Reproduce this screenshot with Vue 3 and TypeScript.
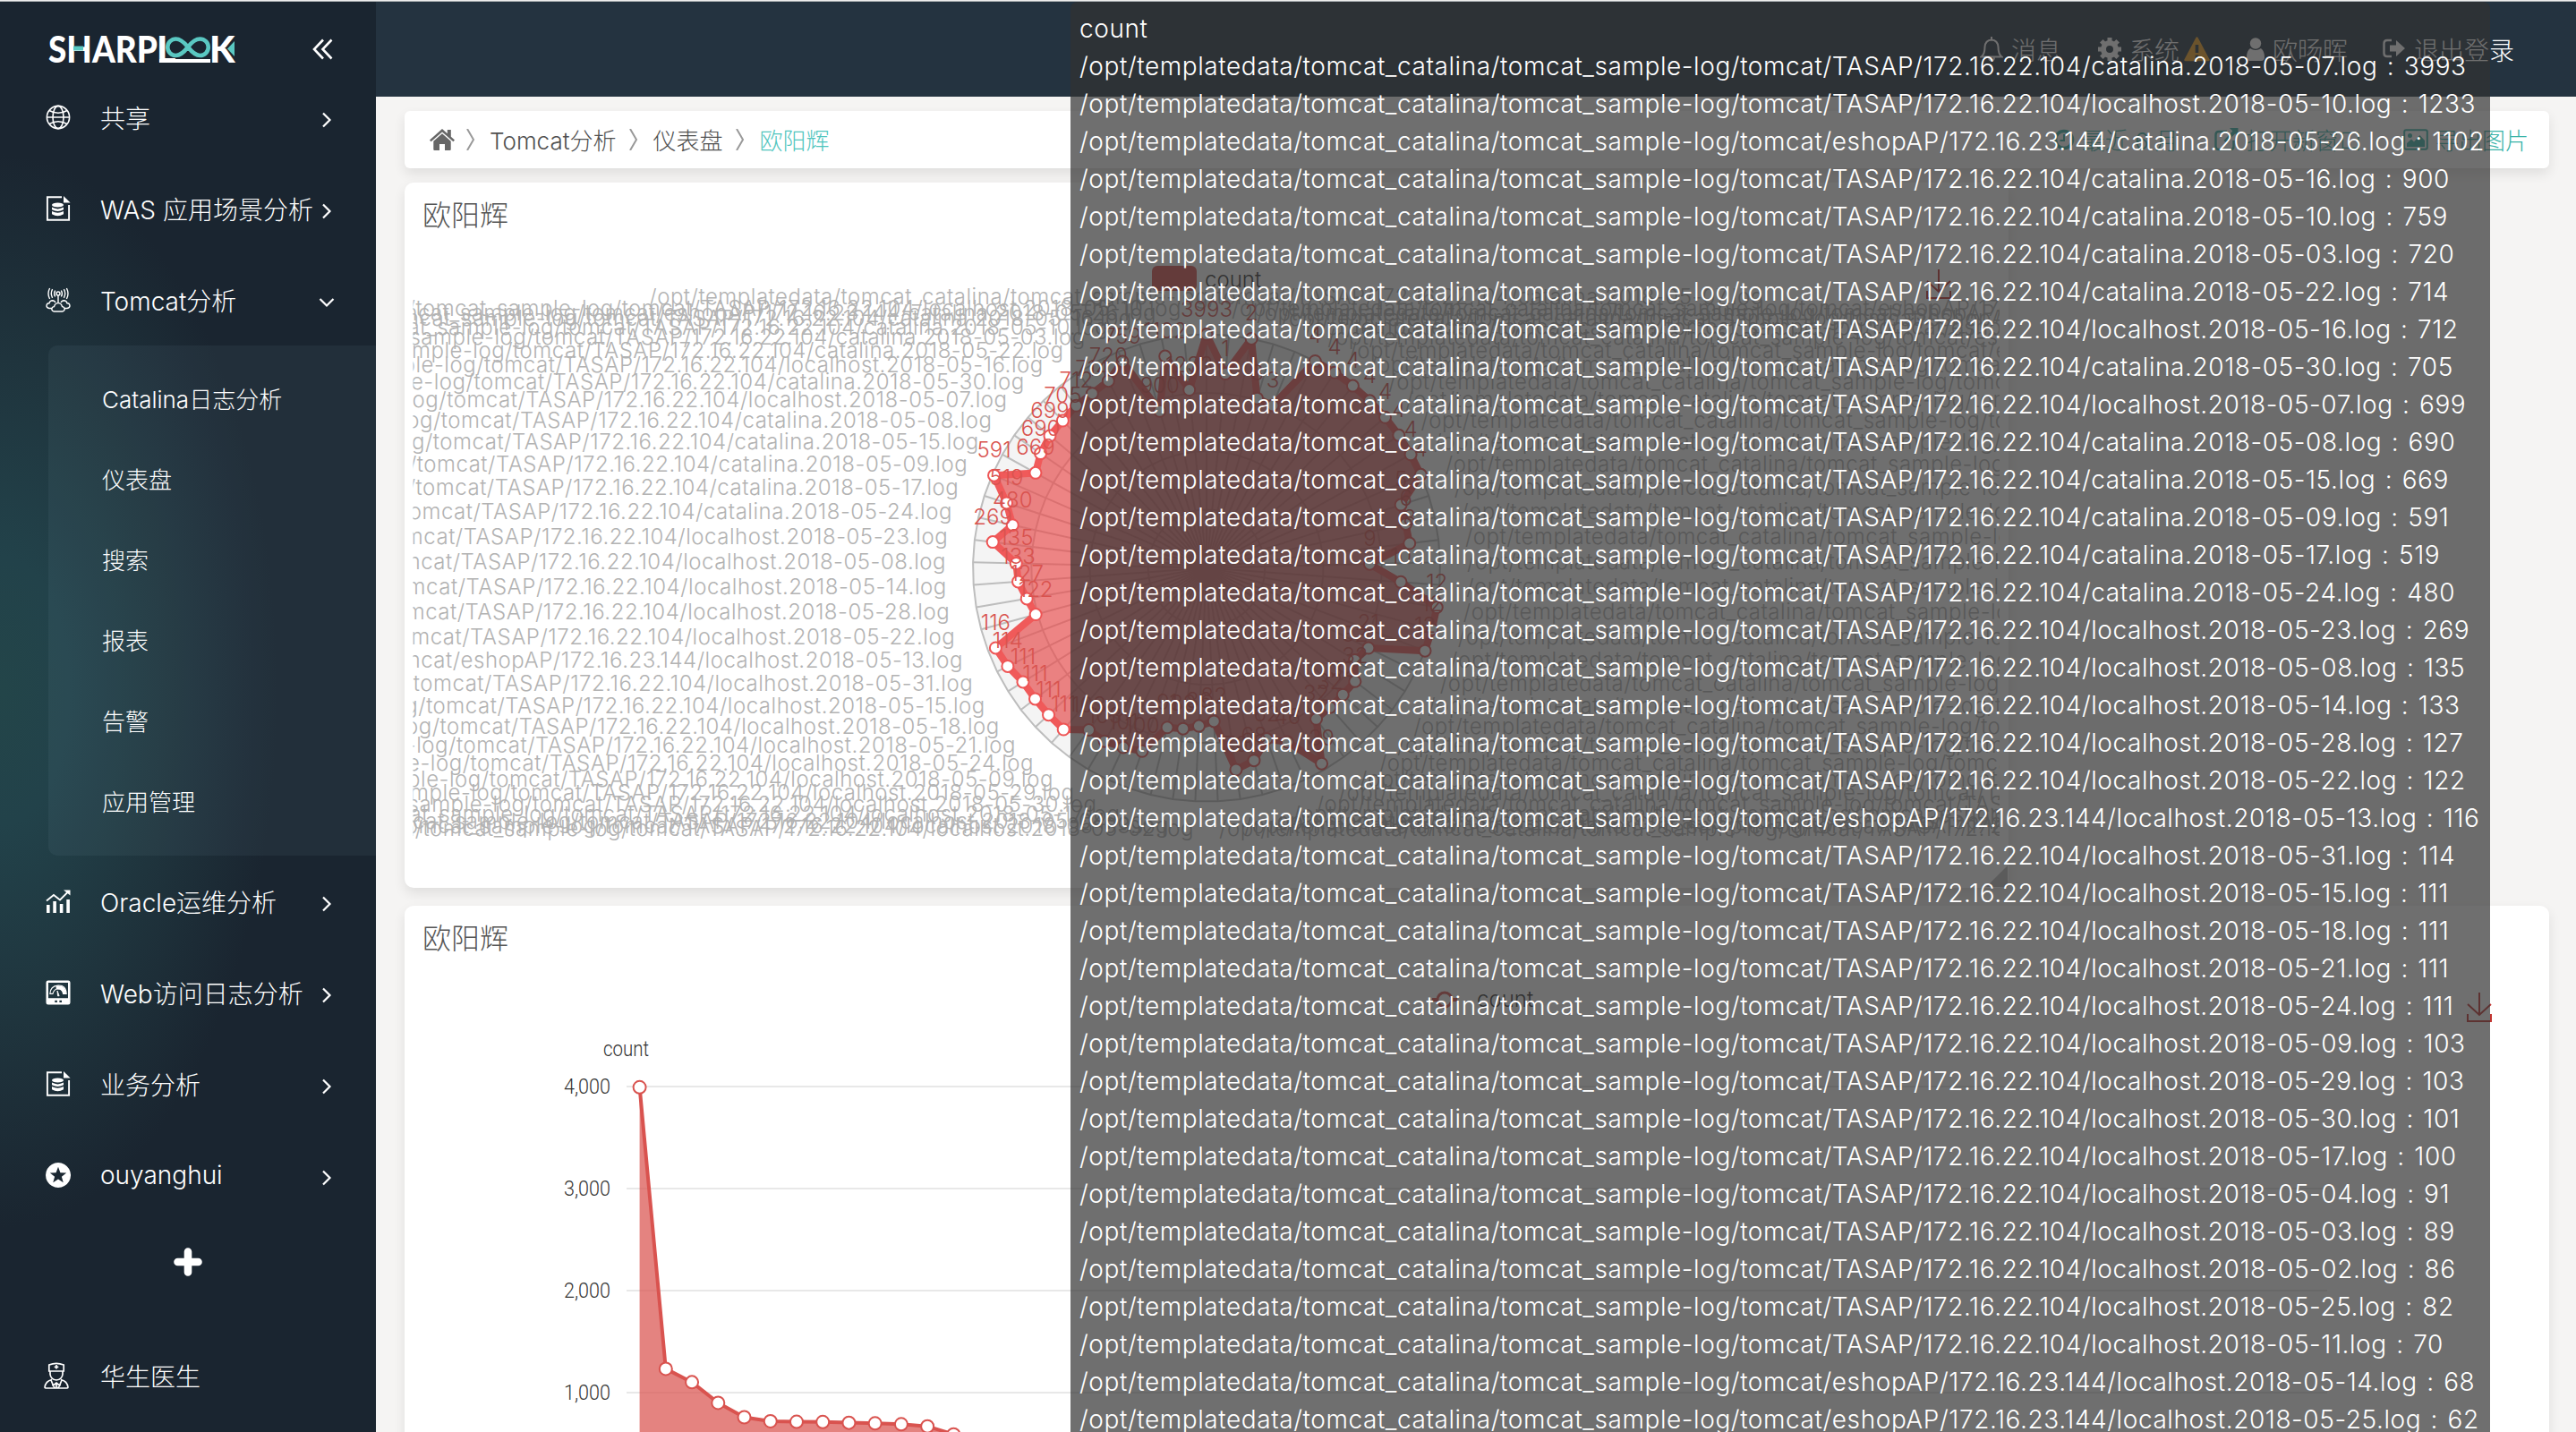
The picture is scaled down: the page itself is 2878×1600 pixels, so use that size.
<script setup lang="ts">
interface Row { app: string; file: string; date: string; value: number }

const parse = (s: string): Row => {
  const [kind, day, value] = s.split(' ')
  const shop = kind.startsWith('e')
  return {
    app: shop ? 'eshopAP/172.16.23.144' : 'TASAP/172.16.22.104',
    file: kind.endsWith('c') ? 'catalina' : 'localhost',
    date: `2018-05-${day}`,
    value: Number(value),
  }
}

const rows: Row[] = [
  'tc 07 3993', 'tl 10 1233', 'ec 26 1102', 'tc 16 900', 'tc 10 759', 'tc 03 720', 'tc 22 714', 'tl 16 712',
  'tc 30 705', 'tl 07 699', 'tc 08 690', 'tc 15 669', 'tc 09 591', 'tc 17 519', 'tc 24 480', 'tl 23 269',
  'tl 08 135', 'tl 14 133', 'tl 28 127', 'tl 22 122', 'el 13 116', 'tl 31 114', 'tl 15 111', 'tl 18 111',
  'tl 21 111', 'tl 24 111', 'tl 09 103', 'tl 29 103', 'tl 30 101', 'tl 17 100', 'tl 04 91', 'tl 03 89',
  'tl 02 86', 'tl 25 82', 'tl 11 70', 'el 14 68', 'el 25 62', 'tl 12 46', 'tl 27 39', 'tl 01 32',
  'tl 26 32', 'tl 20 32', 'tl 19 32', 'tc 31 32', 'tc 14 21', 'ec 13 12', 'ec 14 12', 'tc 28 12',
  'tc 11 10', 'tc 04 9', 'tc 29 8', 'tc 25 6', 'tc 12 5', 'ec 25 4', 'ec 27 4', 'ec 24 4',
  'ec 22 4', 'ec 21 4', 'ec 20 4', 'ec 18 4', 'ec 17 4', 'ec 16 3', 'ec 15 3', 'el 26 2', 'el 27 1',
].map(parse)

const path = (r: Row) => `/opt/templatedata/tomcat_catalina/tomcat_sample-log/tomcat/${r.app}/${r.file}.${r.date}.log`
const tipRows = rows.slice(0, 37)

/* radar geometry, in card coordinates */
const cx = 896
const cy = 430.6
const R = 261
const n = rows.length
const radii = [
  261, 200, 241, 183, 249, 236, 233, 232.6, 230, 229, 225.3, 218.6, 259, 235, 222, 240.6, 212.8, 211, 203.7, 197.8,
  252, 247.8, 241.4, 241, 241, 241, 223.7, 224.6, 221, 217, 183.5, 181.5, 176.7, 171.5, 227.8, 221.5, 202.4, 214.4,
  253.6, 208.5, 208, 208, 208.7, 195, 201.8, 261, 261, 261, 217.6, 182.4, 228.4, 228, 228.3, 261, 261, 261, 261, 261,
  261, 261, 261, 196, 197.7, 261, 218,
]
const at = (i: number, r: number) => {
  const a = (Math.PI * 2 * i) / n
  return { x: cx - Math.sin(a) * r, y: cy - Math.cos(a) * r }
}
const poly = (r: (i: number) => number) =>
  rows.map((_, i) => at(i, r(i))).map(p => `${p.x.toFixed(1)},${p.y.toFixed(1)}`).join(' ')
const rings = [1, 0.75, 0.5, 0.25].map(k => poly(() => R * k))
const spokes = rows.map((_, i) => at(i, R))
const nodes = rows.map((r, i) => ({ ...at(i, radii[i]), v: r.value }))
const shape = poly(i => radii[i])
const names = rows.map((r, i) => {
  const p = at(i, R + 30)
  return {
    x: p.x,
    y: i === 0 ? p.y - 4 : p.y + 8.5,
    anchor: i === 0 ? 'middle' : i <= n / 2 ? 'end' : 'start',
    text: path(r),
  }
})

/* area chart, in card coordinates */
const linePts = rows.map((r, i) => ({ x: 262.6 + i * 29.23, y: 658 - r.value * 0.114 }))
const lineStr = linePts.map(p => `${p.x.toFixed(1)},${p.y.toFixed(1)}`).join(' ')
const areaStr = `262.6,658 ${lineStr} ${linePts[n - 1].x.toFixed(1)},658`
const ticks = [
  { t: '4,000', y: 202 }, { t: '3,000', y: 316 }, { t: '2,000', y: 430 }, { t: '1,000', y: 544 },
]

const top = [
  { icon: 'globe', label: '共享', open: false },
  { icon: 'doc', label: 'WAS 应用场景分析', open: false },
  { icon: 'cloud', label: 'Tomcat分析', open: true },
]
const sub = ['Catalina日志分析', '仪表盘', '搜索', '报表', '告警', '应用管理']
const bottom = [
  { icon: 'trend', label: 'Oracle运维分析' },
  { icon: 'gauge', label: 'Web访问日志分析' },
  { icon: 'doc', label: '业务分析' },
  { icon: 'star', label: 'ouyanghui' },
]
</script>

<template>
  <div class="page">
    <svg width="0" height="0" class="defs">
      <symbol id="globe" viewBox="0 0 28 28"><g fill="none" stroke="#fff" stroke-width="1.6"><circle cx="14" cy="14" r="12.6" /><ellipse cx="14" cy="14" rx="6" ry="12.6" /><path d="M4 6.500q10 5.500 20 0M4 21.500q10-5.500 20 0M1.400 14h25.200" /></g></symbol>
      <symbol id="doc" viewBox="0 0 28 28"><path d="M18 1.200H1.900v25.600h24.200V10" fill="none" stroke="#fff" stroke-width="1.900" /><path d="M20 0v7.600h7.600z" fill="#fff" /><ellipse cx="13.500" cy="10" rx="6.500" ry="2.600" fill="#fff" /><path d="M7 12.600q6.500 3.600 13 0v2.600q-6.500 3.600-13 0zM7 17q6.500 3.600 13 0v3.200q-6.500 4-13 0z" fill="#fff" /></symbol>
      <symbol id="cloud" viewBox="0 0 28 28"><g fill="none" stroke="#fff" stroke-width="1.400"><circle cx="14" cy="7" r="2" /><path d="M14 9v8M10.600 3.500q-2 3.500 0 7M17.400 3.500q2 3.500 0 7M7.600 2.200q-2.600 4.800 0 9.600M20.400 2.200q2.600 4.800 0 9.600M4.600 1q-3.200 6 0 12M23.400 1q3.200 6 0 12" /><path d="M7.500 23.500H4q-3-.4-3-3 .3-2.800 3-2.800.8-3 3.600-3 2.700.2 3.200 2.500M20.500 23.500H24q3-.4 3-3-.3-2.800-3-2.800-.8-3-3.600-3-2.700.2-3.200 2.500M9.500 27q-2.600-.3-2.700-2.700.2-2.500 2.700-2.700 1-4 4.500-4t4.500 4q2.500.2 2.700 2.700-.1 2.400-2.700 2.700z" /></g></symbol>
      <symbol id="trend" viewBox="0 0 28 28"><path d="M1 18h3.600v9H1zM8.300 14h3.600v13H8.300zM15.800 17h3.600v10h-3.600zM23.300 12h3.600v15h-3.600z" fill="#fff" /><path d="M1 13.500 9 7l7 5.500L25 3.500" fill="none" stroke="#fff" stroke-width="1.800" /><path d="M20 1.500h7.500v6z" fill="#fff" /></symbol>
      <symbol id="gauge" viewBox="0 0 30 30"><path fill-rule="evenodd" fill="#fff" d="M3 .5h24q2.500 0 2.500 2.500v24q0 2.500-2.500 2.500H3Q.5 29.500.5 27V3Q.5.5 3 .5zM3.200 3.200v18.600h23.600V3.200zM11 24.500v2.400h2.800v-2.400zm5.500 0v2.400h2.800v-2.400z" /><path d="M5.200 16.500Q5.500 7 15 6.500T24.800 16.500H21Q20 11 15.500 10.500 10 10.500 8.500 16.500z" fill="none" stroke="#fff" stroke-width="1.200" /><path d="M12.500 7q11-1.800 12.300 9.500H21Q20 10.500 12.500 11z" fill="#fff" /><path d="M14 13l2.200 6h-1.700z" fill="#fff" stroke="#fff" /></symbol>
      <symbol id="star" viewBox="0 0 28 28"><path fill-rule="evenodd" fill="#fff" d="M14 0a14 14 0 1 0 .01 0zM14 4.800l2.400 6.400 6.800.3-5.300 4.200 1.800 6.600-5.700-3.700-5.700 3.700 1.800-6.600-5.300-4.200 6.800-.3z" /></symbol>
      <symbol id="doctor" viewBox="0 0 28 30"><g fill="none" stroke="#fff" stroke-width="1.700"><path d="M5.800 3q8-3.400 16.400 0v7H5.800zM7 10v3.500q.8 6 7 6.500 6.200-.5 7-6.500V10" /><path d="M9 19.500q-7 1.500-8 8.500.2 1 1.500 1h23q1.300 0 1.500-1-1-7-8-8.500M8 20l2.500 6 3.500-3 3.500 3L20 20M14 23v6M9.500 25l3 4M18.500 25l-3 4M14 3v4.600M11.700 5.300h4.600" /></g></symbol>
      <symbol id="right" viewBox="0 0 12 18"><path d="M2 1.500 9.500 9 2 16.500" fill="none" stroke="#fff" stroke-width="2.200" /></symbol>
      <symbol id="dl" viewBox="0 0 28 34"><path d="M14 0v25M1 13l13 12 13-12M1 24v8h26v-8" fill="none" stroke="#c23531" stroke-width="2" /></symbol>
    </svg>

    <div class="strip"></div>
    <div class="shell">
      <aside class="side">
        <div class="brand">
          <svg class="mark" width="210" height="36" viewBox="0 0 210 36">
            <g class="logo">
              <text x="0" y="32" textLength="122" lengthAdjust="spacingAndGlyphs">SHARP</text>
              <text x="121" y="32">L</text>
              <text x="180" y="32">K</text>
            </g>
            <rect x="28" y="13.500" width="11" height="5" fill="#5ac8c2" />
            <rect x="124" y="28" width="57" height="4" fill="#fff" />
            <path d="M156 14.500c-5-6-9-9-13.500-9a9 9 0 0 0 0 18.500c4.500 0 8.500-3 13.500-9.500s9-9 13.500-9a9 9 0 0 1 0 18.500c-4.500 0-8.500-3-13.500-9.500z" fill="none" stroke="#5ac8c2" stroke-width="4.600" />
            <path d="M208 8v17l-8-8.500z" fill="#5ac8c2" />
          </svg>
          <svg class="collapse" width="24" height="24" viewBox="0 0 24 24"><path d="M12 1.500 2 12l10 10.500M21.500 1.500 11.500 12l10 10.500" fill="none" stroke="#fff" stroke-width="2.600" /></svg>
        </div>
        <div v-for="m in top" :key="m.label" class="item">
          <svg class="ico"><use :href="'#' + m.icon" /></svg>
          <span>{{ m.label }}</span>
          <svg class="arrow" :class="{ open: m.open }"><use href="#right" /></svg>
        </div>
        <div class="sub">
          <div v-for="s in sub" :key="s" class="subitem">{{ s }}</div>
        </div>
        <div v-for="m in bottom" :key="m.label" class="item">
          <svg class="ico"><use :href="'#' + m.icon" /></svg>
          <span>{{ m.label }}</span>
          <svg class="arrow"><use href="#right" /></svg>
        </div>
        <div class="plus"><svg width="32" height="32" viewBox="0 0 32 32"><path d="M16 4.500v23M4.500 16h23" stroke="#fff" stroke-width="8.600" stroke-linecap="round" /></svg></div>
        <div class="item doctor">
          <svg class="ico"><use href="#doctor" /></svg>
          <span>华生医生</span>
        </div>
      </aside>

      <main class="main">
        <header class="header">
          <div class="hlink l1">
            <svg width="26" height="28" viewBox="0 0 26 28"><path d="M1.500 22.500q4-3 4-11Q6 4 13 3.500q7 .5 7.500 8 0 8 4 11zM10 23.500q.5 3 3 3t3-3M13 3.500V0" fill="none" stroke="#fff" stroke-width="2" /></svg>消息
          </div>
          <div class="hlink l2">
            <svg width="26" height="26" viewBox="0 0 26 26"><circle cx="13" cy="13" r="7" fill="none" stroke="#fff" stroke-width="6" /><path d="M13 0v5M13 21v5M0 13h5M21 13h5M3.800 3.800l3.500 3.500M18.700 18.700l3.500 3.500M22.200 3.800l-3.500 3.500M7.300 18.700l-3.500 3.500" stroke="#fff" stroke-width="5" /></svg>系统
            <svg class="warn" width="29" height="28" viewBox="0 0 29 28"><path d="M14.500 1.500 27.500 26h-26z" fill="#f0a020" stroke="#f0a020" stroke-width="2.500" stroke-linejoin="round" /><path d="M14.500 9v9M14.500 20.500v3.500" stroke="#24333f" stroke-width="3.600" /></svg>
          </div>
          <div class="hlink l3">
            <svg width="20" height="26" viewBox="0 0 20 26"><circle cx="10" cy="6.500" r="6.200" fill="#fff" /><path d="M4 12q6 4 12 0 4 3 4 10 0 4-4 4H4q-4 0-4-4 0-7 4-10z" fill="#fff" /></svg>欧旸晖
          </div>
          <div class="hlink l4">
            <svg width="26" height="24" viewBox="0 0 26 24"><path d="M10 2H5Q1.500 2 1.500 5.500v11Q1.500 20 5 20h5" fill="none" stroke="#fff" stroke-width="2.400" /><path d="M8 7.500h7V2l10 9-10 9v-5.500H8z" fill="#fff" /></svg>退出登录
          </div>
        </header>

        <div class="content">
          <nav class="card crumbs">
            <svg width="28" height="24" viewBox="0 0 28 24"><path d="M14 0 0 12.500l1.600 1.800L14 3.400l12.400 10.900 1.600-1.800-4.200-3.800V1h-4v4.200z" fill="#666" /><path d="M14 5.200 4.300 13.800V23q0 1 1 1H11v-7h6v7h5.700q1 0 1-1v-9.200z" fill="#666" /></svg>
            <svg class="sep s1"><path d="M1 0 8 12 1 24" /></svg>
            <span>Tomcat分析</span>
            <svg class="sep"><path d="M1 0 8 12 1 24" /></svg>
            <span>仪表盘</span>
            <svg class="sep"><path d="M1 0 8 12 1 24" /></svg>
            <span class="teal">欧阳辉</span>
            <div class="actions">
              <span class="act a1"><svg width="24" height="26" viewBox="0 0 24 26"><circle cx="12" cy="13" r="9.500" fill="none" stroke="#38b3a8" stroke-width="3.600" /><path d="M12 7v7H7.500" fill="none" stroke="#38b3a8" stroke-width="2" /></svg>最近 6 月</span>
              <span class="act a2"><svg width="27" height="26" viewBox="0 0 27 26"><path d="M14 4H5Q1.500 4 1.500 7.500v13Q1.500 24 5 24h13q3.500 0 3.500-3.500V14" fill="none" stroke="#38b3a8" stroke-width="2.400" /><path d="M17 0h9.500v9.500l-3.300-3.300L13 16.500 10.500 14 20.300 3.500z" fill="#38b3a8" /></svg>打开新窗口</span>
              <span class="act a3"><svg width="28" height="24" viewBox="0 0 28 24"><rect x="1.200" y="1.200" width="25.600" height="21.600" rx="2" fill="none" stroke="#38b3a8" stroke-width="2" /><circle cx="7.500" cy="7.500" r="2.500" fill="#38b3a8" /><path d="M4 20v-4l5-4.500 3 3L18.500 7l5.500 6v7z" fill="#38b3a8" /></svg>导出图片</span>
            </div>
          </nav>

          <section class="card radar">
            <h3>欧阳辉</h3>
            <svg class="chart" width="1792" height="788" viewBox="0 0 1792 788">
              <clipPath id="canvas"><rect x="9.500" y="60" width="1772.500" height="700" /></clipPath>
              <rect x="835" y="93" width="50" height="28" rx="6" fill="#d9534f" />
              <text x="894" y="116.500" class="legend">count</text>
              <polygon :points="rings[0]" fill="#f4f4f4" />
              <polygon :points="rings[1]" fill="#fff" />
              <polygon v-for="(r, i) in rings" :key="'r' + i" :points="r" fill="none" stroke="#bdbdbd" stroke-width="2" />
              <line v-for="(p, i) in spokes" :key="'s' + i" :x1="cx" :y1="cy" :x2="p.x" :y2="p.y" stroke="#bdbdbd" stroke-width="2" />
              <g clip-path="url(#canvas)">
                <text v-for="(t, i) in names" :key="'n' + i" :x="t.x" :y="t.y" :text-anchor="t.anchor" class="name">{{ t.text }}</text>
              </g>
              <polygon :points="shape" fill="#e65050" fill-opacity=".7" stroke="#f05a5a" stroke-width="8" stroke-linejoin="bevel" />
              <circle v-for="(p, i) in nodes" :key="'c' + i" :cx="p.x" :cy="p.y" r="6.500" fill="#fff" stroke="#ee5555" stroke-width="2" />
              <text v-for="(p, i) in nodes" :key="'v' + i" :x="p.x" :y="p.y - 20" class="val">{{ p.v }}</text>
              <path d="M1791 763v24h-24z" fill="#bbb" />
              <svg x="1700" y="97" width="28" height="34"><use href="#dl" /></svg>
            </svg>
          </section>

          <section class="card area">
            <h3>欧阳辉</h3>
            <svg class="chart" width="2396" height="588" viewBox="0 0 2396 588">
              <line v-for="k in ticks" :key="k.t" x1="248" x2="2148" :y1="k.y" :y2="k.y" stroke="#e8e8e8" stroke-width="2" />
              <text v-for="k in ticks" :key="'t' + k.t" x="178" :y="k.y + 8" textLength="52" lengthAdjust="spacingAndGlyphs" class="tick">{{ k.t }}</text>
              <text x="222" y="168" textLength="51" lengthAdjust="spacingAndGlyphs" class="tick">count</text>
              <polygon :points="areaStr" fill="#d9534f" fill-opacity=".72" />
              <polyline :points="lineStr" fill="none" stroke="#d9534f" stroke-width="4" />
              <circle v-for="(p, i) in linePts" :key="i" :cx="p.x" :cy="p.y" r="7" fill="#fff" stroke="#d9534f" stroke-width="2" />
              <path d="M1148 105h28" stroke="#d9534f" stroke-width="4" /><circle cx="1162" cy="105" r="8" fill="#fff" stroke="#d9534f" stroke-width="3" />
              <text x="1198" y="113" class="legend">count</text>
              <svg x="2304" y="97" width="28" height="34"><use href="#dl" /></svg>
            </svg>
          </section>
        </div>
      </main>
    </div>

    <div class="tooltip">
      <div class="tiprow">count</div>
      <div v-for="(r, i) in tipRows" :key="i" class="tiprow">{{ path(r) }} : {{ r.value }}</div>
    </div>
  </div>
</template>

<style>
body { margin: 0; overflow: hidden; }
</style>

<style scoped>
.page { position: relative; width: 2878px; height: 1600px; overflow: hidden; background: #f5f4f3; font-family: Inter, "Noto Sans CJK SC", sans-serif; font-weight: 300; }
.defs { position: absolute; }
.strip { height: 1px; background: #eee; border-bottom: 1px solid #a8adb0; }
.shell { display: flex; height: 1598px; }
.side { width: 420px; flex: none; color: #fff; background: radial-gradient(ellipse 310px 600px at 0 770px, #234549 0, #22424a 25%, #1f343d 62%, #1a2530 100%) #1a2530; }
.brand { height: 78px; box-sizing: border-box; padding: 36px 47px 0 54px; display: flex; justify-content: space-between; align-items: flex-start; }
.mark { overflow: visible; }
.collapse { margin-top: 5px; }
.logo { font-family: Lato, sans-serif; font-weight: 900; font-size: 41px; fill: #fff; }
.item { height: 102px; display: flex; align-items: center; font-size: 28px; padding: 0 49px 0 51px; white-space: nowrap; }
.item span { margin-left: 33px; }
.ico { width: 28px; height: 28px; flex: none; }
.arrow { width: 12px; height: 18px; margin-left: auto; margin-top: 6px; }
.arrow.open { transform: rotate(90deg); }
.sub { margin-left: 54px; height: 570px; box-sizing: border-box; padding: 16px 0 0 60px; background: rgba(200, 240, 255, .05); border-radius: 10px 0 0 10px; }
.subitem { height: 90px; line-height: 90px; font-size: 26px; }
.plus { height: 92px; display: flex; align-items: center; justify-content: center; }
.doctor { margin-top: 30px; }
.doctor .ico { height: 30px; margin-left: -2px; margin-right: 2px; }
.main { flex: 1; min-width: 0; }
.header { height: 106px; background: #243340; color: #fff; display: flex; justify-content: flex-end; align-items: center; padding-right: 69px; font-size: 28px; font-weight: 300; box-sizing: border-box; }
.hlink { display: flex; align-items: center; gap: 9px; white-space: nowrap; }
.l2, .l3 { margin-left: 41px; }
.l4 { margin-left: 39px; }
.warn { margin-left: -4px; }
.content { padding: 16px 30px 0 32px; display: flex; flex-direction: column; }
.card { background: #fff; border-radius: 10px; box-shadow: 0 6px 14px rgba(0, 0, 0, .09); flex: none; color: #555; }
.crumbs { height: 64px; border-radius: 6px; display: flex; align-items: center; font-size: 26px; padding: 0 23px 1px 28px; box-sizing: border-box; color: #505050; }
.sep { width: 10px; height: 24px; margin: 0 16px 0 15px; fill: none; stroke: #999; stroke-width: 2; }
.s1 { margin: 0 16px 0 13px; }
.teal { color: #4fc5be; }
.actions { margin-left: auto; display: flex; color: #38b3a8; }
.act { display: flex; align-items: center; gap: 8px; }
.a2 { margin-left: 40px; }
.a3 { margin-left: 46px; }
.card h3 { margin: 0; font-size: 32px; line-height: 48px; padding: 13px 0 0 20px; font-weight: 300; height: 61px; box-sizing: border-box; }
.radar { width: 1792px; height: 788px; margin-top: 16px; }
.area { height: 700px; margin-top: 20px; }
.chart { display: block; margin-top: -61px; }
.name { font-size: 24px; fill: #b3b3b3; letter-spacing: .52px; }
.val { font-size: 24px; fill: #d9534f; text-anchor: middle; }
.legend { font-size: 24px; fill: #333; }
.tick { font-size: 24px; fill: #333; font-family: Roboto, sans-serif; }
.tooltip { position: absolute; left: 1196px; top: 2px; width: 1586px; height: 1640px; box-sizing: border-box; padding: 10px; background: rgba(50, 50, 50, .7); border-radius: 8px; color: #fff; font-size: 28px; letter-spacing: .58px; word-spacing: 2px; }
.tiprow { height: 42px; line-height: 41px; white-space: nowrap; }
</style>
